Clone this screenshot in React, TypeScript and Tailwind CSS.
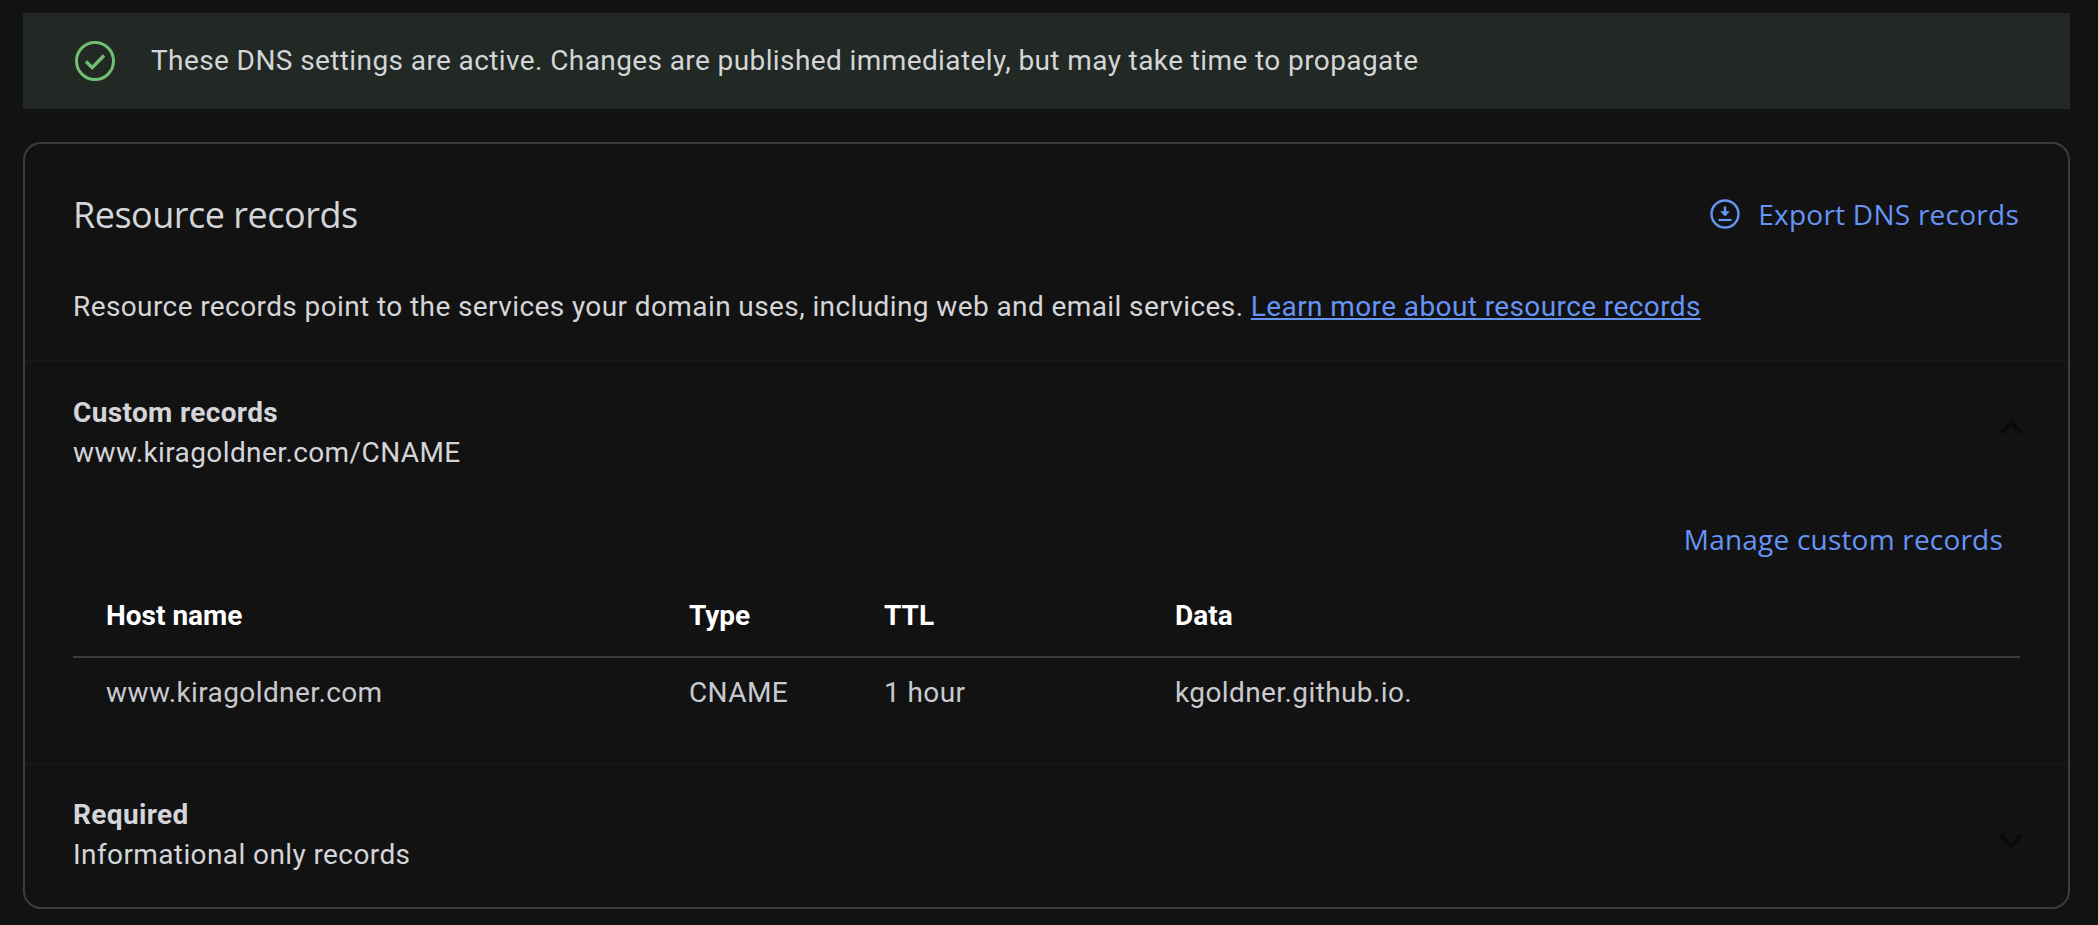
import { ChevronDown, ChevronUp } from "lucide-react";

const columns = ["Host name", "Type", "TTL", "Data"];
const row = ["www.kiragoldner.com", "CNAME", "1 hour", "kgoldner.github.io."];

function CheckIcon() {
  return (
    <svg width="40" height="40" viewBox="0 0 40 40" fill="none" stroke="#6fbf73">
      <circle cx="20" cy="20" r="18.5" strokeWidth="3" />
      <path d="M11 20.5l6.2 6.2L29 14.5" strokeWidth="3.4" />
    </svg>
  );
}

function ExportIcon() {
  return (
    <svg width="30" height="30" viewBox="0 0 30 30" fill="none" stroke="#6594f5">
      <circle cx="15" cy="15" r="13.5" strokeWidth="2.4" />
      <path d="M15 7.5v8.5" strokeWidth="2.4" />
      <path d="M10.2 12.2h9.6L15 17.5z" fill="#6594f5" stroke="none" />
      <path d="M8.5 21h13" strokeWidth="2.2" />
    </svg>
  );
}

export default function App() {
  return (
    <div className="min-h-[925px] bg-[#121212] pl-[23px] pr-[28px] pt-[13px] pb-[17px] font-['Roboto',sans-serif] text-[28px] text-[#d3d5d9]">
      <div className="flex h-[96px] items-center gap-[36px] bg-[#222823] pl-[52px] pr-6 tracking-[0.4px]">
        <CheckIcon />
        <span>These DNS settings are active. Changes are published immediately, but may take time to propagate</span>
      </div>

      <div className="mt-[33px] rounded-[18px] border-2 border-[#3c3d41]">
        <div className="flex h-[142px] items-center justify-between pl-[48px] pr-[49px]">
          <h1 className="font-['Open_Sans',sans-serif] text-[36px] font-normal tracking-[-0.5px] text-[#d3d5d9]">Resource records</h1>
          <a className="mb-[2px] flex items-center gap-[18px] font-['Open_Sans',sans-serif] text-[28px] font-medium tracking-[0.25px] text-[#6594f5]">
            <ExportIcon />
            Export DNS records
          </a>
        </div>

        <p className="mt-[3px] pl-[48px] leading-[36px] tracking-[0.4px]">
          Resource records point to the services your domain uses, including web and email services.{" "}
          <a className="text-[#6594f5] underline">Learn more about resource records</a>
        </p>

        <div className="mt-[35px] border-t-2 border-[#161718] px-[48px]">
          <div className="flex items-center justify-between pt-[31px]">
            <div className="leading-[40px]">
              <div className="font-bold tracking-[0.35px]">Custom records</div>
              <div className="tracking-[0.4px]">www.kiragoldner.com/CNAME</div>
            </div>
            <ChevronUp size={36} strokeWidth={3} className="mr-[-9px] mb-[12px] text-[#0a0a0b]" />
          </div>

          <div className="mt-[45px] pr-[17px] text-right font-['Open_Sans',sans-serif] text-[28px] font-medium tracking-[0.2px] text-[#6594f5]">Manage custom records</div>

          <div className="mt-[35px] grid grid-cols-[583px_195px_291px_1fr] border-b-2 border-[#3c3d41] pb-[19px] pl-[33px] font-bold text-white">
            {columns.map((c) => (
              <div key={c}>{c}</div>
            ))}
          </div>
          <div className="grid grid-cols-[583px_195px_291px_1fr] pl-[33px] pt-[14px] pb-[49px] tracking-[0.4px] text-[#c8cacf]">
            {row.map((c) => (
              <div key={c}>{c}</div>
            ))}
          </div>
        </div>

        <div className="flex items-center justify-between border-t-2 border-[#161718] px-[48px] pt-[30px] pb-[32px]">
          <div className="leading-[40px]">
            <div className="font-bold tracking-[0.35px]">Required</div>
            <div className="tracking-[0.4px]">Informational only records</div>
          </div>
          <ChevronDown size={36} strokeWidth={3} className="mr-[-9px] mt-[12px] text-[#0a0a0b]" />
        </div>
      </div>
    </div>
  );
}
